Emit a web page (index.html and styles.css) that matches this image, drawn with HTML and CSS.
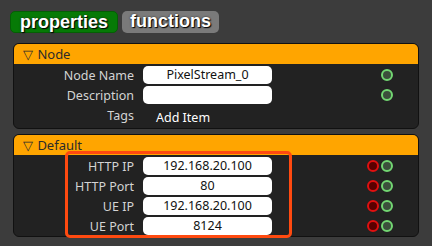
FILE: index.html
```html
<!DOCTYPE html>
<html lang="en">
<head>
  <meta charset="UTF-8" />
  <title>Properties</title>
  <link rel="stylesheet" href="styles.css">
</head>
<body>
  <div class="tabs">
    <div class="tab tab-active">properties</div>
    <div class="tab">functions</div>
  </div>

  <section class="panel">
    <div class="panel-head"><span class="caret">&#9661;</span> Node</div>
    <div class="row">
      <label>Node Name</label>
      <div class="field">PixelStream_0</div>
      <div class="pins"><span class="pin pin-out"></span></div>
    </div>
    <div class="row">
      <label>Description</label>
      <div class="field"></div>
      <div class="pins"><span class="pin pin-out"></span></div>
    </div>
    <div class="row">
      <label>Tags</label>
      <div class="add-item">Add Item</div>
    </div>
  </section>

  <section class="panel panel-default">
    <div class="panel-head"><span class="caret">&#9661;</span> Default</div>
    <div class="row">
      <label>HTTP IP</label>
      <div class="field">192.168.20.100</div>
      <div class="pins"><span class="pin pin-in"></span><span class="pin pin-out"></span></div>
    </div>
    <div class="row">
      <label>HTTP Port</label>
      <div class="field">80</div>
      <div class="pins"><span class="pin pin-in"></span><span class="pin pin-out"></span></div>
    </div>
    <div class="row">
      <label>UE IP</label>
      <div class="field">192.168.20.100</div>
      <div class="pins"><span class="pin pin-in"></span><span class="pin pin-out"></span></div>
    </div>
    <div class="row">
      <label>UE Port</label>
      <div class="field">8124</div>
      <div class="pins"><span class="pin pin-in"></span><span class="pin pin-out"></span></div>
    </div>
    <div class="highlight"></div>
  </section>
</body>
</html>
```

FILE: styles.css
```css
body {
  margin: 0;
  padding: 11px 0 0 10px;
  background-color: #3c3c3c;
  font-family: 'Noto Sans', 'Open Sans', sans-serif;
  width: 432px;
  height: 246px;
  box-sizing: border-box;
  overflow: hidden;
}
.tabs {
  display: flex;
  gap: 4px;
  margin-bottom: 10px;
}
.tab {
  height: 22px;
  line-height: 21px;
  padding: 0 8px;
  border-radius: 5px;
  background-color: #7a7a7a;
  color: #fff;
  font-family: 'Liberation Sans', Arial, sans-serif;
  font-weight: bold;
  font-size: 18px;
  text-shadow: 1px 1px 1px #000, 0 0 2px #222;
  box-sizing: border-box;
}
.tab-active {
  background-color: #067a06;
  border: 1px solid #045f04;
  padding: 0 9px;
}
.panel {
  position: relative;
  width: 406px;
  margin-left: 3px;
  background-color: #222222;
  border: 1px solid #111;
  border-radius: 6px;
  box-sizing: border-box;
  padding-bottom: 3px;
}
.panel-default {
  margin-top: 5px;
  padding-bottom: 0;
}
.panel-head {
  height: 20px;
  line-height: 20px;
  background-color: #ffa500;
  color: #2b2b2b;
  font-size: 13px;
  padding-left: 9px;
  border-radius: 5px 5px 0 0;
  margin-bottom: 1px;
}
.caret {
  font-size: 13px;
  margin-right: 1px;
}
.row {
  display: flex;
  align-items: center;
  height: 20px;
}
.row label {
  width: 120px;
  text-align: right;
  color: #d4d4d4;
  font-size: 12.5px;
  margin-right: 9px;
}
.field {
  width: 129px;
  height: 18px;
  line-height: 18px;
  background: #fff;
  border-radius: 5px;
  color: #111;
  font-size: 12.5px;
  text-align: center;
}
.add-item {
  color: #fff;
  font-size: 12.5px;
  margin-left: 13px;
  margin-top: 4px;
}
.pins {
  display: flex;
  justify-content: flex-end;
  gap: 2px;
  width: 121px;
}
.pin {
  width: 12px;
  height: 12px;
  border-radius: 50%;
  box-sizing: border-box;
}
.pin-out {
  border: 2px solid #72d672;
  background: #3b4f3b;
}
.pin-in {
  border: 2px solid #e01010;
  background: #5a0000;
}
.highlight {
  position: absolute;
  left: 51px;
  top: 16px;
  width: 227px;
  height: 87px;
  border: 3px solid #ff4a10;
  border-radius: 5px;
  box-sizing: border-box;
}
```
